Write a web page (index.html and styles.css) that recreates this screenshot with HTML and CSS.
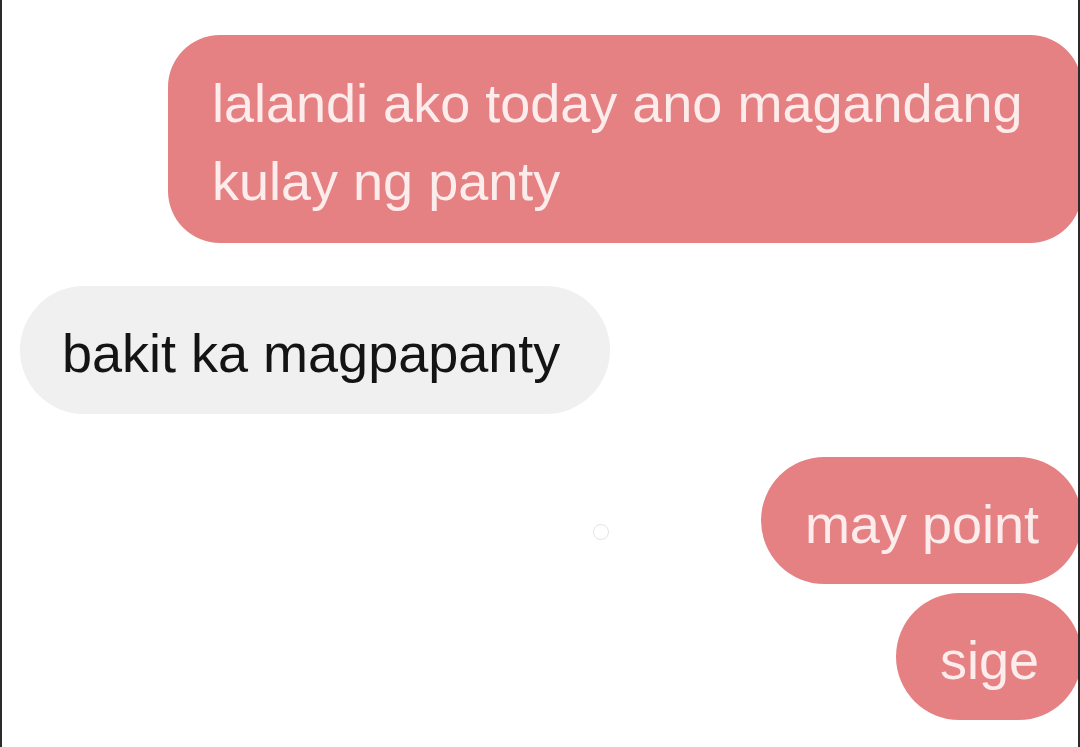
FILE: index.html
```html
<!DOCTYPE html>
<html lang="tl">
<head>
<meta charset="utf-8">
<title>Chat</title>
<link rel="stylesheet" href="styles.css">
</head>
<body>
<div class="screen">
  <div class="bubble sent multi">lalandi ako today ano magandang kulay ng panty</div>
  <div class="bubble received">bakit ka magpapanty</div>
  <div class="row">
    <span class="seen"></span>
    <div class="bubble sent">may point</div>
  </div>
  <div class="bubble sent tight">sige</div>
</div>
</body>
</html>
```
FILE: styles.css
```css
html, body {
  margin: 0;
  padding: 0;
  background: #ffffff;
}

.screen {
  width: 1080px;
  height: 747px;
  box-sizing: border-box;
  border-left: 2px solid #2b2b2b;
  border-right: 2px solid #2b2b2b;
  background: #ffffff;
  overflow: hidden;
  padding-top: 35px;
  display: flex;
  flex-direction: column;
  font-family: "Liberation Sans", Arial, sans-serif;
  font-size: 54px;
  line-height: 78px;
}

.bubble {
  box-sizing: border-box;
  max-width: 914px;
  padding: 28px 43px 21px 44px;
  border-radius: 64px;
  white-space: normal;
}

.sent {
  align-self: flex-end;
  margin-right: -4px;
  background: #e58182;
  color: #fdecec;
}

.multi {
  border-radius: 52px;
  padding-top: 29px;
  padding-bottom: 23px;
}

.received {
  align-self: flex-start;
  margin-left: 18px;
  margin-top: 43px;
  padding-left: 42px;
  padding-right: 50px;
  padding-bottom: 22px;
  background: #f0f0f0;
  color: #141414;
}

.row {
  display: flex;
  justify-content: flex-end;
  align-items: flex-start;
  margin-top: 43px;
}

.row .sent {
  align-self: auto;
}

.seen {
  width: 14px;
  height: 14px;
  border-radius: 50%;
  border: 1px solid #e4e4e4;
  background: #ffffff;
  margin-top: 67px;
  margin-right: 152px;
}

.tight {
  margin-top: 9px;
}
```
